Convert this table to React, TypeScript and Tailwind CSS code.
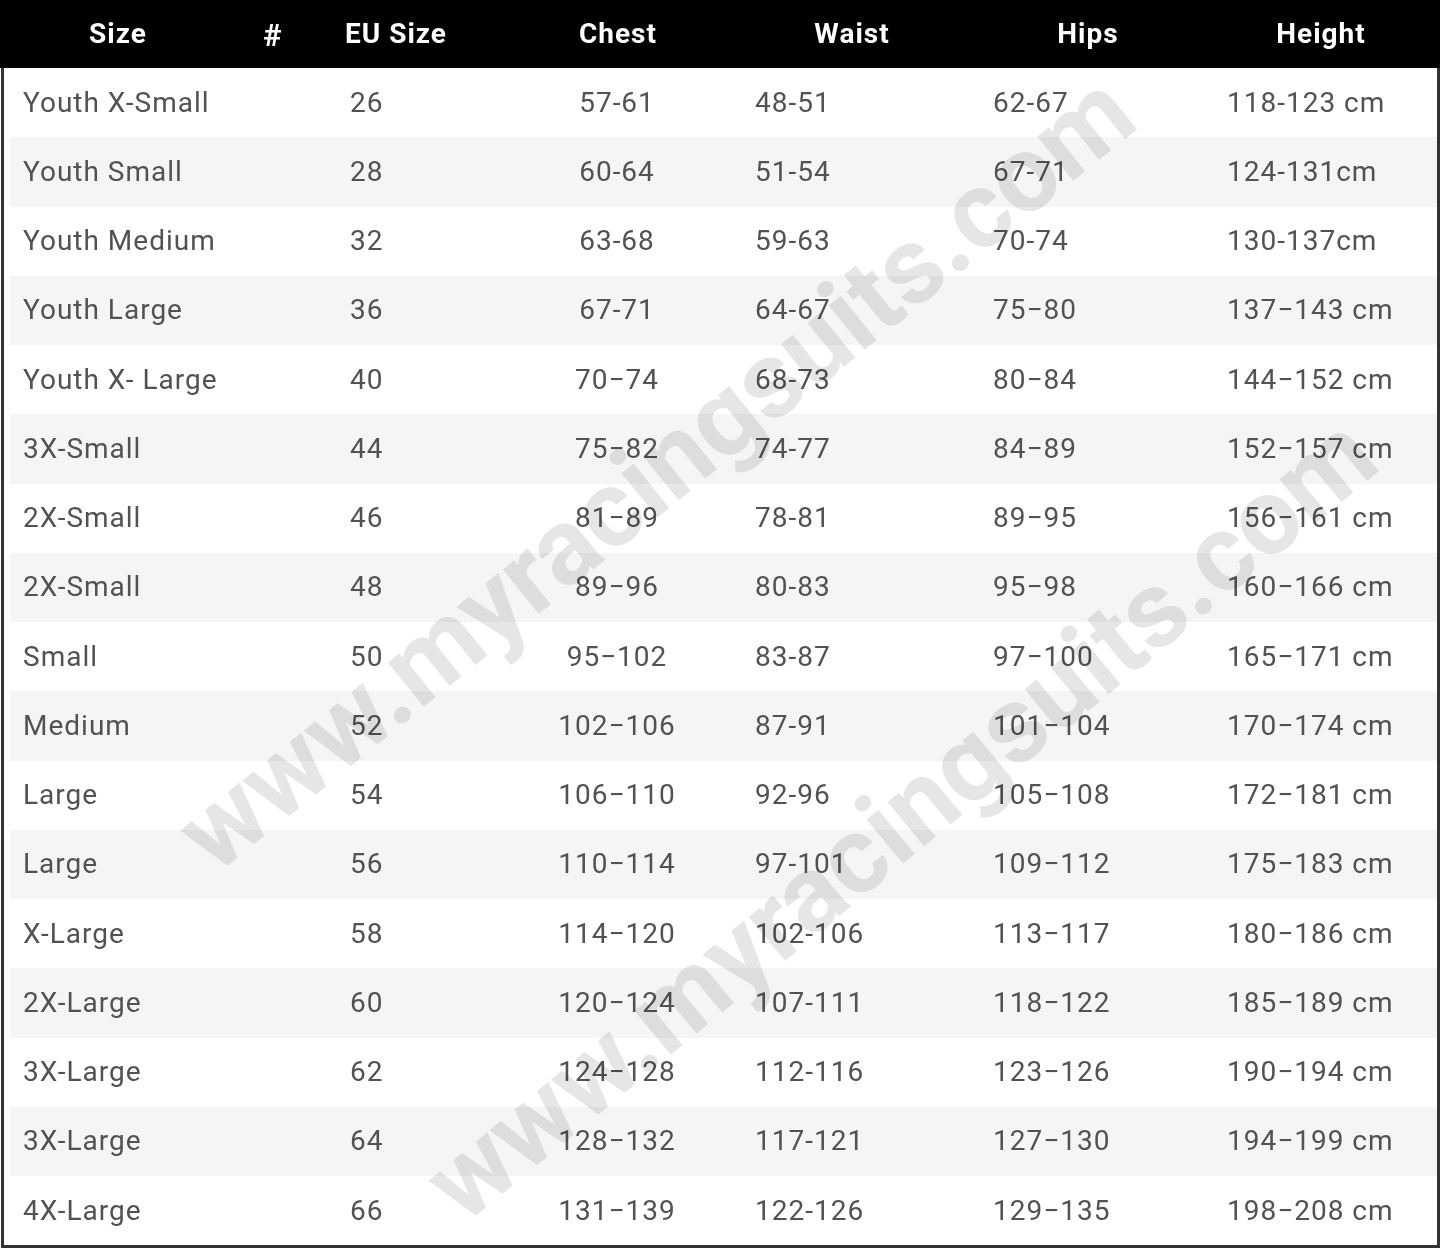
const headers = [
  { label: "Size", w: "w-[236px]", extra: "" },
  { label: "#", w: "w-[74px]", extra: "text-[31px] pt-[4px]" },
  { label: "EU Size", w: "w-[172px]", extra: "" },
  { label: "Chest", w: "w-[272px]", extra: "" },
  { label: "Waist", w: "w-[196px]", extra: "" },
  { label: "Hips", w: "w-[276px]", extra: "" },
  { label: "Height", w: "w-[190px]", extra: "" },
]

const rows: [string, string, string, string, string, string][] = [
  ["Youth X-Small", "26", "57-61", "48-51", "62-67", "118-123 cm"],
  ["Youth Small", "28", "60-64", "51-54", "67-71", "124-131cm"],
  ["Youth Medium", "32", "63-68", "59-63", "70-74", "130-137cm"],
  ["Youth Large", "36", "67-71", "64-67", "75−80", "137−143 cm"],
  ["Youth X- Large", "40", "70−74", "68-73", "80−84", "144−152 cm"],
  ["3X-Small", "44", "75−82", "74-77", "84−89", "152−157 cm"],
  ["2X-Small", "46", "81−89", "78-81", "89−95", "156−161 cm"],
  ["2X-Small", "48", "89−96", "80-83", "95−98", "160−166 cm"],
  ["Small", "50", "95−102", "83-87", "97−100", "165−171 cm"],
  ["Medium", "52", "102−106", "87-91", "101−104", "170−174 cm"],
  ["Large", "54", "106−110", "92-96", "105−108", "172−181 cm"],
  ["Large", "56", "110−114", "97-101", "109−112", "175−183 cm"],
  ["X-Large", "58", "114−120", "102-106", "113−117", "180−186 cm"],
  ["2X-Large", "60", "120−124", "107-111", "118−122", "185−189 cm"],
  ["3X-Large", "62", "124−128", "112-116", "123−126", "190−194 cm"],
  ["3X-Large", "64", "128−132", "117-121", "127−130", "194−199 cm"],
  ["4X-Large", "66", "131−139", "122-126", "129−135", "198−208 cm"],
]

export default function App() {
  return (
    <div className="relative w-[1445px] h-[1252px] bg-white font-['Roboto',sans-serif] overflow-hidden">
      {/* Header */}
      <div className="flex items-center h-[68px] w-[1440px] bg-black text-white font-bold text-[28px] tracking-[1px]">
        {headers.map((h) => (
          <div key={h.label} className={`${h.w} ${h.extra} text-center`}>
            {h.label}
          </div>
        ))}
      </div>

      {/* Body */}
      <div className="ml-[1px] w-[1439px] border-l-[3px] border-r-[3px] border-b-[3px] border-[#333333] pl-[6px] text-[28px] tracking-[1px] text-[#525252]">
        {rows.map((r, i) => (
          <div
            key={i}
            className={`grid grid-cols-[320px_150px_274px_239px_234px_1fr] items-center h-[69.25px] ${
              i % 2 === 1 ? "bg-[#f4f5f7]" : "bg-white"
            }`}
          >
            <div className="pl-[13px]">{r[0]}</div>
            <div className="pl-[20px]">{r[1]}</div>
            <div className="text-center">{r[2]}</div>
            <div className="pl-[1px]">{r[3]}</div>
            <div>{r[4]}</div>
            <div>{r[5]}</div>
          </div>
        ))}
      </div>

      {/* Watermark */}
      <div className="absolute left-[655px] top-[472px] -translate-x-1/2 -translate-y-1/2 rotate-[-39deg] whitespace-nowrap font-bold text-[108px] leading-none text-[#e6e6e6] mix-blend-multiply pointer-events-none">
        www.myracingsuits.com
      </div>
      <div className="absolute left-[900px] top-[818px] -translate-x-1/2 -translate-y-1/2 rotate-[-39.5deg] whitespace-nowrap font-bold text-[108px] leading-none text-[#e6e6e6] mix-blend-multiply pointer-events-none">
        www.myracingsuits.com
      </div>
    </div>
  )
}
